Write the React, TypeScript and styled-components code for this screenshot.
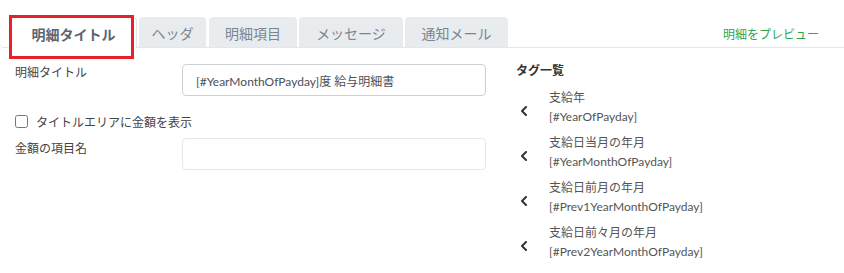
import React from "react";
import styled, { createGlobalStyle } from "styled-components";

const GlobalStyle = createGlobalStyle`
  html, body { margin: 0; padding: 0; background: #fff; }
  body {
    font-family: "Lato", "Noto Sans CJK JP", sans-serif;
    color: #444;
    -webkit-font-smoothing: antialiased;
  }
  * { box-sizing: border-box; }
`;

const Page = styled.div`
  width: 844px;
  height: 273px;
  overflow: hidden;
  background: #fff;
`;

const TabBar = styled.div`
  display: flex;
  align-items: flex-end;
  margin-top: 16px;
  padding-left: 10px;
  padding-right: 25px;
  height: 32px;
  border-bottom: 1px solid #e3e6ea;
  border-bottom-left-radius: 4px;
`;

const Tab = styled.div<{ $active?: boolean; $width: number; $gap: number }>`
  position: relative;
  width: ${(p) => p.$width}px;
  height: ${(p) => (p.$active ? 31 : 30)}px;
  margin-right: ${(p) => p.$gap}px;
  margin-bottom: ${(p) => (p.$active ? -1 : 0)}px;
  display: flex;
  align-items: center;
  justify-content: center;
  padding-top: 2px;
  font-size: 14px;
  font-weight: ${(p) => (p.$active ? 700 : 400)};
  color: ${(p) => (p.$active ? "#5b6572" : "#7b8590")};
  background: ${(p) => (p.$active ? "#fff" : "#e9ecef")};
  border: ${(p) => (p.$active ? "1px solid #e3e6ea" : "none")};
  border-bottom: none;
  border-radius: 4px 4px 0 0;
  white-space: nowrap;
`;

const Highlight = styled.span`
  position: absolute;
  left: -2px;
  top: -3px;
  width: 125px;
  height: 44px;
  border: 3px solid #e8202a;
  pointer-events: none;
`;

const PreviewLink = styled.a`
  margin-left: auto;
  align-self: center;
  margin-top: 4px;
  font-size: 12px;
  color: #2ea44f;
  text-decoration: none;
  cursor: pointer;
`;

const Body = styled.div`
  display: flex;
  padding: 16px 0 0 15px;
`;

const FormCol = styled.div`
  width: 471px;
  display: flex;
  flex-direction: column;
`;

const FieldRow = styled.div<{ $mt: number }>`
  display: grid;
  grid-template-columns: 167px 304px;
  margin-top: ${(p) => p.$mt}px;
`;

const Label = styled.label<{ $pt: number }>`
  font-size: 12px;
  line-height: 18px;
  padding-top: ${(p) => p.$pt}px;
  color: #444;
`;

const TextInput = styled.input<{ $light?: boolean }>`
  width: 304px;
  height: 32px;
  padding: 0 13px;
  font-family: inherit;
  font-size: 12px;
  color: #495057;
  border: 1px solid ${(p) => (p.$light ? "#e6e7e9" : "#cdd1d6")};
  border-radius: 4px;
  background: #fff;
  outline: none;
`;

const CheckRow = styled.label`
  display: flex;
  align-items: center;
  gap: 8px;
  margin-top: 16px;
  height: 18px;
  font-size: 12px;
  color: #444;
`;

const Check = styled.input`
  margin: 0;
  width: 13px;
  height: 13px;
`;

const TagCol = styled.div`
  margin-left: 30px;
  display: flex;
  flex-direction: column;
`;

const TagHeading = styled.div`
  font-size: 12px;
  font-weight: 700;
  line-height: 18px;
  margin-top: -2px;
  margin-bottom: 5px;
  color: #333;
`;

const TagItem = styled.div`
  display: flex;
  align-items: center;
  height: 45px;
  padding: 3px 0 4px;
  cursor: pointer;
`;

const Chevron = styled.svg`
  width: 33px;
  flex: none;
  margin-top: 7px;
`;

const TagText = styled.div`
  display: flex;
  flex-direction: column;
  font-size: 12px;
  line-height: 19px;
  color: #555;
`;

const tabs = [
  { label: "明細タイトル", width: 127, gap: 2, active: true },
  { label: "ヘッダ", width: 67, gap: 3 },
  { label: "明細項目", width: 88, gap: 2 },
  { label: "メッセージ", width: 104, gap: 2 },
  { label: "通知メール", width: 103, gap: 0 },
];

const tags = [
  { name: "支給年", code: "[#YearOfPayday]" },
  { name: "支給日当月の年月", code: "[#YearMonthOfPayday]" },
  { name: "支給日前月の年月", code: "[#Prev1YearMonthOfPayday]" },
  { name: "支給日前々月の年月", code: "[#Prev2YearMonthOfPayday]" },
];

export default function App() {
  return (
    <Page>
      <GlobalStyle />
      <TabBar>
        {tabs.map((t) => (
          <Tab key={t.label} $active={t.active} $width={t.width} $gap={t.gap}>
            {t.label}
            {t.active && <Highlight />}
          </Tab>
        ))}
        <PreviewLink>明細をプレビュー</PreviewLink>
      </TabBar>
      <Body>
        <FormCol>
          <FieldRow $mt={0}>
            <Label $pt={0}>明細タイトル</Label>
            <TextInput defaultValue="[#YearMonthOfPayday]度 給与明細書" />
          </FieldRow>
          <CheckRow>
            <Check type="checkbox" />
            タイトルエリアに金額を表示
          </CheckRow>
          <FieldRow $mt={8}>
            <Label $pt={2}>金額の項目名</Label>
            <TextInput $light />
          </FieldRow>
        </FormCol>
        <TagCol>
          <TagHeading>タグ一覧</TagHeading>
          {tags.map((t) => (
            <TagItem key={t.code}>
              <Chevron viewBox="0 0 33 10" height="10">
                <polyline
                  points="10,1 6,5 10,9"
                  fill="none"
                  stroke="#333"
                  strokeWidth="2"
                  strokeLinecap="round"
                  strokeLinejoin="round"
                />
              </Chevron>
              <TagText>
                <span>{t.name}</span>
                <span>{t.code}</span>
              </TagText>
            </TagItem>
          ))}
        </TagCol>
      </Body>
    </Page>
  );
}
